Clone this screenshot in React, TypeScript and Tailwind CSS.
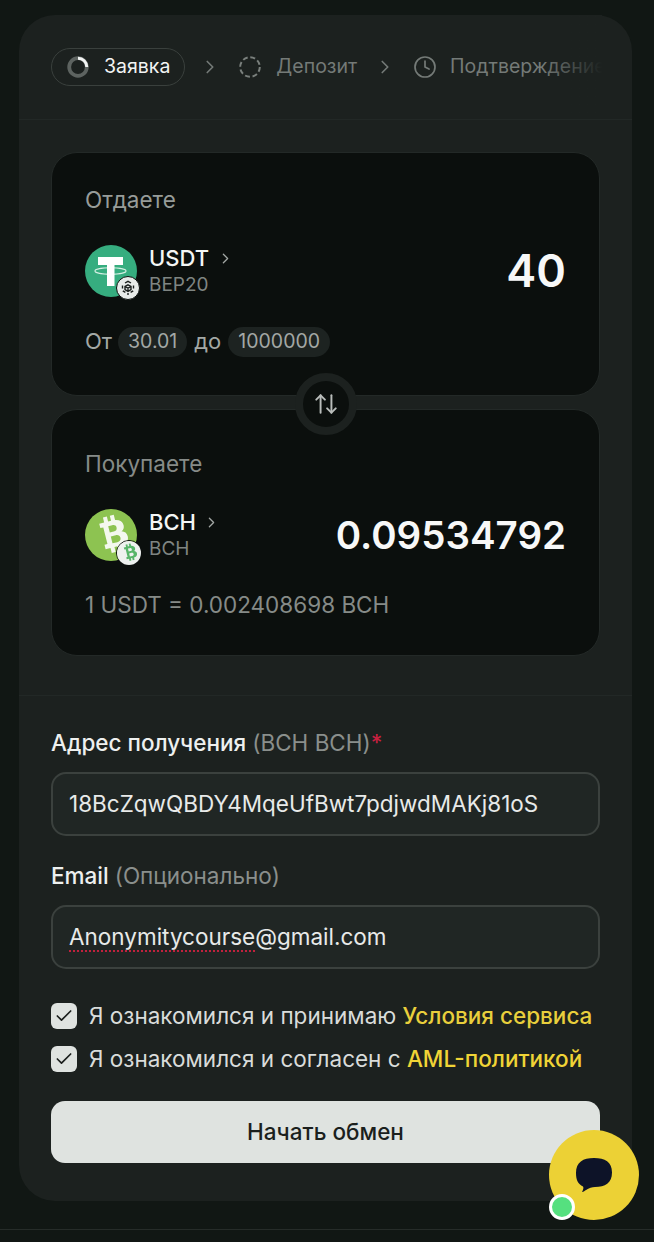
import React from "react";
import { ChevronRight, Check, Clock, ArrowUpDown } from "lucide-react";

function Chevron({ size = 22, cls = "" }: { size?: number; cls?: string }) {
  return <ChevronRight size={size} strokeWidth={1.8} className={cls} />;
}

function TetherIcon() {
  return (
    <svg width="52" height="52" viewBox="0 0 52 52">
      <circle cx="26" cy="26" r="26" fill="#36ad7f" />
      <ellipse cx="25.500" cy="26" rx="15.500" ry="3.200" fill="none" stroke="#d5efe3" strokeWidth="1.100" />
      <path d="M13 12h25v8h-8.500v21h-7.500V20H13z" fill="#fff" />
    </svg>
  );
}

function BnbBadge() {
  return (
    <svg width="24" height="24" viewBox="0 0 24 24">
      <circle cx="12" cy="12" r="11.500" fill="#e8ebe9" stroke="#0a0e0c" strokeWidth="1" />
      <g fill="none" stroke="#1b1f1d" strokeWidth="1.400">
        <path d="M9 7l3-1.700L15 7M6.500 9.500v3M17.500 9.500v3M6.800 14.800l2.600 1.600M17.200 14.800l-2.600 1.600" />
        <path d="M12 8.800l3 1.700v3.200l-3 1.700-3-1.700v-3.200zM9 10.500l3 1.700 3-1.700M12 12.200v3.200" />
        <path d="M12 17v2" />
      </g>
    </svg>
  );
}

function BitcoinIcon({ size, bg, fg, rotate = -14 }: { size: number; bg: string; fg: string; rotate?: number }) {
  return (
    <div
      className="flex items-center justify-center rounded-full"
      style={{ width: size, height: size, background: bg }}
    >
      <svg width={size * 0.78} height={size * 0.78} viewBox="0 0 40 40" style={{ transform: `rotate(${rotate}deg)` }}>
        <path
          fillRule="evenodd"
          fill={fg}
          d="M11 7h5V2h4v5h3V2h4v5.300c4.500.8 7 3.400 7 6.900 0 2.600-1.300 4.500-3.500 5.400 3 .9 4.800 3.100 4.800 6.200 0 4.600-3.700 7.200-8.300 7.500V38h-4v-5h-3v5h-4v-5h-5v-4.500h3V11.500h-3zM19 11.500v6.500h4c2.200 0 3.700-1.200 3.700-3.300s-1.500-3.200-3.700-3.200zM19 22v7h5c2.400 0 4-1.300 4-3.500S26.400 22 24 22z"
        />
      </svg>
    </div>
  );
}

function Dashed() {
  return (
    <svg width="22" height="22" viewBox="0 0 22 22" fill="none" className="shrink-0">
      <circle cx="11" cy="11" r="9.800" stroke="#7a807d" strokeWidth="2" strokeDasharray="5 2.700" />
    </svg>
  );
}

function Spinner() {
  return (
    <svg width="22" height="22" viewBox="0 0 22 22" fill="none">
      <circle cx="11" cy="11" r="8.800" stroke="#5d6360" strokeWidth="3.800" />
      <path d="M11 2.200a8.800 8.800 0 0 1 8.800 8.800" stroke="#f2f4f3" strokeWidth="3" />
    </svg>
  );
}

function Pill({ children }: { children: React.ReactNode }) {
  return (
    <span className="flex h-[30px] items-center rounded-full bg-[#1d2321] px-[10px] text-[19.5px] text-[#a3a8a5]">
      {children}
    </span>
  );
}

function Coin({
  name,
  net,
  gap,
  icon,
  badge,
}: {
  name: string;
  net: string;
  gap: string;
  icon: React.ReactNode;
  badge: React.ReactNode;
}) {
  return (
    <div className="flex items-center gap-3">
      <div className="relative h-[52px] w-[52px]">
        {icon}
        <div className="absolute left-[31px] top-[31px]">{badge}</div>
      </div>
      <div className="flex flex-col">
        <div className={`flex items-center ${gap}`}>
          <span className="text-[22px] leading-[28px] font-medium text-[#f4f6f5]">{name}</span>
          <Chevron size={17} cls="text-[#a3a8a5]" />
        </div>
        <span className="mt-px text-[19px] leading-[24px] text-[#7f8582]">{net}</span>
      </div>
    </div>
  );
}

function Check2({ children }: { children: React.ReactNode }) {
  return (
    <div className="flex h-[26px] items-center gap-3">
      <span className="flex h-[26px] w-[26px] items-center justify-center rounded-[6px] bg-[#dfe3e0]">
        <Check size={20} strokeWidth={2} className="text-[#1b1f1d]" />
      </span>
      <span className="text-[22.5px] leading-[26px] text-[#d9dcda]">{children}</span>
    </div>
  );
}

export default function App() {
  return (
    <div
      className="relative h-[1242px] w-[654px] overflow-hidden bg-[#111714]"
      style={{ fontFamily: "Inter, 'Noto Sans', sans-serif" }}
    >
      <div className="ml-[19px] mt-[15px] h-[1186px] w-[613px] rounded-[36px] bg-[#1c211f]">
        <div className="relative h-[105px] overflow-hidden border-b border-[#222826] pl-[32px] pr-[30px] pt-[33px]">
          <div className="flex items-center overflow-hidden text-[19.5px] text-[#747a77]">
            <div className="flex h-[38px] shrink-0 items-center gap-[15px] rounded-full border border-[#3a403d] pl-[15px] pr-[14px] text-[#f2f4f3]">
              <Spinner />
              Заявка
            </div>
            <Chevron size={22} cls="ml-[14px] mr-[18px] shrink-0 text-[#747a77]" />
            <div className="flex shrink-0 items-center gap-[15px]">
              <Dashed />
              Депозит
            </div>
            <Chevron size={22} cls="ml-[17px] mr-[17px] shrink-0 text-[#747a77]" />
            <div className="flex shrink-0 items-center gap-[13px]">
              <Clock size={24} strokeWidth={1.7} />
              Подтверждение
            </div>
          </div>
          <div className="absolute bottom-0 right-[30px] top-0 w-[60px] bg-gradient-to-r from-transparent to-[#1c211f]" />
        </div>

        <div className="relative border-b border-[#222826] px-[32px] pb-[39px] pt-[32px]">
          <div className="h-[244px] rounded-[26px] border border-[#232927] bg-[#0b0f0d] px-[33px] pt-[33px]">
            <div className="text-[22.5px] leading-[28px] text-[#979c99]">Отдаете</div>
            <div className="mt-[30px] flex items-center justify-between">
              <Coin
                name="USDT"
                net="BEP20"
                gap="gap-[8px]"
                icon={<TetherIcon />}
                badge={<BnbBadge />}
              />
              <span className="text-[45px] leading-[52px] font-semibold text-[#f7f8f8]">40</span>
            </div>
            <div className="mt-[28px] flex items-center gap-[7px] text-[22px] text-[#a3a8a5]">
              <span className="mr-[-1px]">От</span> <Pill>30.01</Pill> до <Pill>1000000</Pill>
            </div>
          </div>

          <div className="mt-[13px] h-[247px] rounded-[26px] border border-[#232927] bg-[#0b0f0d] px-[33px] pt-[40px]">
            <div className="text-[22.5px] leading-[28px] text-[#868b88]">Покупаете</div>
            <div className="mt-[30px] flex items-center justify-between">
              <Coin
                name="BCH"
                net="BCH"
                gap="gap-[7px]"
                icon={<BitcoinIcon size={52} bg="#8dc351" fg="#f4f8ee" />}
                badge={
                  <div className="rounded-full border border-[#0b0f0d]">
                    <BitcoinIcon size={24} bg="#eef1ef" fg="#58b56a" />
                  </div>
                }
              />
              <span className="text-[38.500px] leading-[52px] font-semibold text-[#f7f8f8]">0.09534792</span>
            </div>
            <div className="mt-[30px] text-[22.5px] leading-[28px] text-[#868b88]">1 USDT = 0.002408698 BCH</div>
          </div>

          <div className="absolute left-[276px] top-[253px] flex h-[62px] w-[62px] items-center justify-center rounded-full border-[8px] border-[#1c211f] bg-[#0b0f0d]">
            <ArrowUpDown size={26} strokeWidth={1.8} className="text-[#b9bdbb]" />
          </div>
        </div>

        <div className="px-[32px] pt-[33px]">
          <div className="text-[22.5px] leading-[28px] font-medium text-[#eef0ef]">
            Адрес получения <span className="font-normal text-[#8a8f8c]">(BCH BCH)</span>
            <span className="text-[#c8203f]">*</span>
          </div>
          <div className="mt-[15px] flex h-[64px] items-center rounded-[15px] border-2 border-[#3b413e] bg-[#202624] px-[16px] text-[22.5px] text-[#e8eae9]">
            18BcZqwQBDY4MqeUfBwt7pdjwdMAKj81oS
          </div>
          <div className="mt-[26px] text-[22.5px] leading-[28px] font-medium text-[#eef0ef]">
            Email <span className="font-normal text-[#8a8f8c]">(Опционально)</span>
          </div>
          <div className="mt-[15px] flex h-[64px] items-center rounded-[15px] border-2 border-[#3b413e] bg-[#202624] px-[16px] text-[22.5px] text-[#e8eae9]">
            <span className="underline decoration-[#c0213d] decoration-dotted decoration-2 underline-offset-[5px]">
              Anonymitycourse
            </span>
            @gmail.com
          </div>
          <div className="mt-[34px] flex flex-col gap-[17px]">
            <Check2>
              Я ознакомился и принимаю <span className="font-medium text-[#e9cf3c]">Условия сервиса</span>
            </Check2>
            <Check2>
              Я ознакомился и согласен с <span className="font-medium text-[#f0d436]">AML-политикой</span>
            </Check2>
          </div>
          <button className="mt-[29px] h-[62px] w-full rounded-[14px] bg-[#dfe3e0] text-[22.5px] font-medium text-[#1b1f1d]">
            Начать обмен
          </button>
        </div>
      </div>

      <div className="mt-[28px] h-px bg-[#262c29]" />

      <div className="absolute left-[549px] top-[1130px] flex h-[90px] w-[90px] items-center justify-center rounded-full bg-[#ecd135]">
        <svg width="40" height="40" viewBox="0 0 40 40">
          <path
            d="M20 3c11 0 18 4 18 14.500C38 28 31 32 21 32c-3 0-6 1-9 3-1 .7-2.500 2-4 2 1-2 2-4 1-5.500C4 29 2 25 2 18 2 7 9 3 20 3z"
            fill="#0d1328"
          />
        </svg>
      </div>
      <div className="absolute left-[549px] top-[1194px] h-[26px] w-[26px] rounded-full border-[3px] border-white bg-[#55e07f]" />
    </div>
  );
}
